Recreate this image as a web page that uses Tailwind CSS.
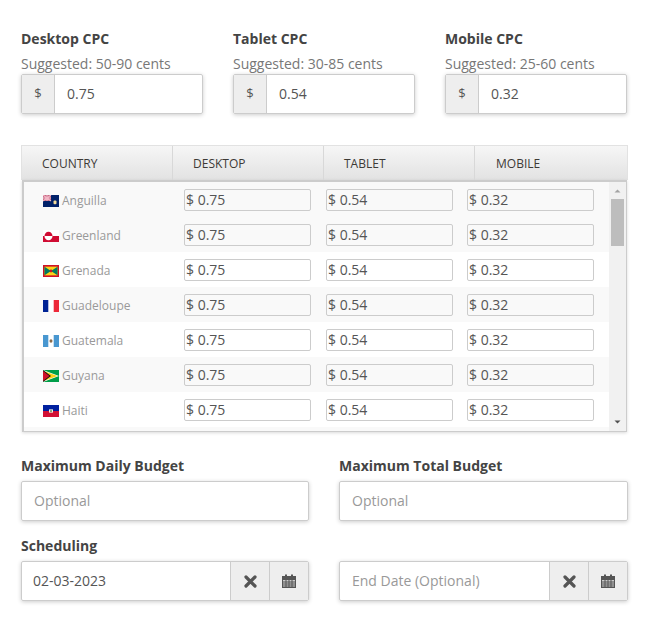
<!DOCTYPE html>
<html><head><meta charset="utf-8"><script src="https://cdn.jsdelivr.net/npm/@tailwindcss/browser@4"></script></head>
<body class="bg-white font-['Open_Sans',sans-serif] text-[14px] text-[#555]">
<div class="w-[647px] h-[619px] overflow-hidden pt-[29px] pl-[21px]">
  <div class="flex gap-[30px] w-[606px]">
    <div class="w-[182px]">
      <div class="font-bold text-[#444] leading-[20px]">Desktop CPC</div>
      <div class="text-[#777] leading-[20px] mt-[5px] h-[20px]">Suggested: 50-90 cents</div>
      <div class="flex h-[40px] border border-[#ccc] rounded-[2px] shadow-[0_1px_4px_rgba(0,0,0,0.2)]">
        <div class="w-[33px] bg-[#eee] border-r border-[#ccc] flex items-center justify-center text-[13px]">$</div>
        <div class="pl-[12px] pb-[2px] flex items-center">0.75</div>
      </div>
    </div>
    <div class="w-[182px]">
      <div class="font-bold text-[#444] leading-[20px]">Tablet CPC</div>
      <div class="text-[#777] leading-[20px] mt-[5px] h-[20px]">Suggested: 30-85 cents</div>
      <div class="flex h-[40px] border border-[#ccc] rounded-[2px] shadow-[0_1px_4px_rgba(0,0,0,0.2)]">
        <div class="w-[33px] bg-[#eee] border-r border-[#ccc] flex items-center justify-center text-[13px]">$</div>
        <div class="pl-[12px] pb-[2px] flex items-center">0.54</div>
      </div>
    </div>
    <div class="w-[182px]">
      <div class="font-bold text-[#444] leading-[20px]">Mobile CPC</div>
      <div class="text-[#777] leading-[20px] mt-[5px] h-[20px]">Suggested: 25-60 cents</div>
      <div class="flex h-[40px] border border-[#ccc] rounded-[2px] shadow-[0_1px_4px_rgba(0,0,0,0.2)]">
        <div class="w-[33px] bg-[#eee] border-r border-[#ccc] flex items-center justify-center text-[13px]">$</div>
        <div class="pl-[12px] pb-[2px] flex items-center">0.32</div>
      </div>
    </div>
  </div>

  <div class="mt-[31px] w-[607px]">
    <div class="flex h-[35px] border border-b-0 border-[#e2e2e2] bg-gradient-to-b from-[#f6f6f6] to-[#e2e2e2] text-[12px] text-[#3d3a36] leading-[35px]">
      <div class="w-[151px] shrink-0 border-r border-[#d8d8d8] pl-[20px]">COUNTRY</div>
      <div class="w-[151px] shrink-0 border-r border-[#d8d8d8] pl-[20px]">DESKTOP</div>
      <div class="w-[151px] shrink-0 border-r border-[#d8d8d8] pl-[20px]">TABLET</div>
      <div class="pl-[21px]">MOBILE</div>
    </div>
    <div class="ml-[1px] w-[605px] h-[252px] border-2 border-r border-b border-[#ccc] flex overflow-hidden shadow-[0_1px_3px_rgba(0,0,0,0.15)]">
      <div class="w-[585px] shrink-0 text-[12px] text-[#999]">
        <div class="h-[35px] flex items-center bg-[#f9f9f9]">
          <div class="w-[160px] pl-[19px] pt-[2px] flex items-center gap-[3px] shrink-0"><svg class="w-[16px] h-[12px]" viewBox="0 0 16 11" preserveAspectRatio="none"><rect width="16" height="11" fill="#012169"/><rect width="8" height="5.5" fill="#c56b85"/><path d="M0 0l8 5.5M8 0L0 5.5M4 0v5.5M0 2.75h8" stroke="#f2b6c6" stroke-width="1"/><rect x="10.5" y="5" width="3" height="3.5" rx="1" fill="#f4dc9a"/></svg>Anguilla</div>
          <div class="flex-1 flex gap-[15px]">
            <div class="w-[127px] h-[22px] shrink-0 border border-[#ccc] rounded-[2px] text-[14px] text-[#555] leading-[20px] pl-[1px]">$ 0.75</div>
            <div class="w-[127px] h-[22px] shrink-0 border border-[#ccc] rounded-[2px] text-[14px] text-[#555] leading-[20px] pl-[1px]">$ 0.54</div>
            <div class="w-[127px] h-[22px] shrink-0 -ml-[1px] border border-[#ccc] rounded-[2px] text-[14px] text-[#555] leading-[20px] pl-[1px]">$ 0.32</div>
          </div>
        </div>
        <div class="h-[35px] flex items-center bg-[#f9f9f9]">
          <div class="w-[160px] pl-[19px] pt-[2px] flex items-center gap-[3px] shrink-0"><svg class="w-[16px] h-[12px]" viewBox="0 0 16 11" preserveAspectRatio="none"><rect width="16" height="5.5" fill="#fff"/><rect y="5.5" width="16" height="5.5" fill="#d00c33"/><path d="M1.500 5.500a4 4 0 0 1 8 0z" fill="#d00c33"/><path d="M1.500 5.500a4 4 0 0 0 8 0z" fill="#fff"/></svg>Greenland</div>
          <div class="flex-1 flex gap-[15px]">
            <div class="w-[127px] h-[22px] shrink-0 border border-[#ccc] rounded-[2px] text-[14px] text-[#555] leading-[20px] pl-[1px]">$ 0.75</div>
            <div class="w-[127px] h-[22px] shrink-0 border border-[#ccc] rounded-[2px] text-[14px] text-[#555] leading-[20px] pl-[1px]">$ 0.54</div>
            <div class="w-[127px] h-[22px] shrink-0 -ml-[1px] border border-[#ccc] rounded-[2px] text-[14px] text-[#555] leading-[20px] pl-[1px]">$ 0.32</div>
          </div>
        </div>
        <div class="h-[35px] flex items-center bg-white">
          <div class="w-[160px] pl-[19px] pt-[2px] flex items-center gap-[3px] shrink-0"><svg class="w-[16px] h-[12px]" viewBox="0 0 16 11" preserveAspectRatio="none"><rect width="16" height="11" fill="#ce1126"/><rect x="1.5" y="1.5" width="13" height="8" fill="#fcd116"/><path d="M1.5 1.5L8 5.5 1.5 9.500zM14.500 1.5L8 5.5l6.500 4z" fill="#007a5e"/><circle cx="8" cy="5.500" r="1.300" fill="#ce1126"/></svg>Grenada</div>
          <div class="flex-1 flex gap-[15px]">
            <div class="w-[127px] h-[22px] shrink-0 border border-[#ccc] rounded-[2px] text-[14px] text-[#555] leading-[20px] pl-[1px] bg-white">$ 0.75</div>
            <div class="w-[127px] h-[22px] shrink-0 border border-[#ccc] rounded-[2px] text-[14px] text-[#555] leading-[20px] pl-[1px] bg-white">$ 0.54</div>
            <div class="w-[127px] h-[22px] shrink-0 -ml-[1px] border border-[#ccc] rounded-[2px] text-[14px] text-[#555] leading-[20px] pl-[1px] bg-white">$ 0.32</div>
          </div>
        </div>
        <div class="h-[35px] flex items-center bg-[#f9f9f9]">
          <div class="w-[160px] pl-[19px] pt-[2px] flex items-center gap-[3px] shrink-0"><svg class="w-[16px] h-[12px]" viewBox="0 0 16 11" preserveAspectRatio="none"><rect width="16" height="11" fill="#fff"/><rect width="5.300" height="11" fill="#002395"/><rect x="10.700" width="5.300" height="11" fill="#ed2939"/></svg>Guadeloupe</div>
          <div class="flex-1 flex gap-[15px]">
            <div class="w-[127px] h-[22px] shrink-0 border border-[#ccc] rounded-[2px] text-[14px] text-[#555] leading-[20px] pl-[1px]">$ 0.75</div>
            <div class="w-[127px] h-[22px] shrink-0 border border-[#ccc] rounded-[2px] text-[14px] text-[#555] leading-[20px] pl-[1px]">$ 0.54</div>
            <div class="w-[127px] h-[22px] shrink-0 -ml-[1px] border border-[#ccc] rounded-[2px] text-[14px] text-[#555] leading-[20px] pl-[1px]">$ 0.32</div>
          </div>
        </div>
        <div class="h-[35px] flex items-center bg-white">
          <div class="w-[160px] pl-[19px] pt-[2px] flex items-center gap-[3px] shrink-0"><svg class="w-[16px] h-[12px]" viewBox="0 0 16 11" preserveAspectRatio="none"><rect width="16" height="11" fill="#fff"/><rect width="5.300" height="11" fill="#4997d0"/><rect x="10.700" width="5.300" height="11" fill="#4997d0"/><circle cx="8" cy="5.500" r="1.500" fill="#8a6a4a"/></svg>Guatemala</div>
          <div class="flex-1 flex gap-[15px]">
            <div class="w-[127px] h-[22px] shrink-0 border border-[#ccc] rounded-[2px] text-[14px] text-[#555] leading-[20px] pl-[1px] bg-white">$ 0.75</div>
            <div class="w-[127px] h-[22px] shrink-0 border border-[#ccc] rounded-[2px] text-[14px] text-[#555] leading-[20px] pl-[1px] bg-white">$ 0.54</div>
            <div class="w-[127px] h-[22px] shrink-0 -ml-[1px] border border-[#ccc] rounded-[2px] text-[14px] text-[#555] leading-[20px] pl-[1px] bg-white">$ 0.32</div>
          </div>
        </div>
        <div class="h-[35px] flex items-center bg-[#f9f9f9]">
          <div class="w-[160px] pl-[19px] pt-[2px] flex items-center gap-[3px] shrink-0"><svg class="w-[16px] h-[12px]" viewBox="0 0 16 11" preserveAspectRatio="none"><rect width="16" height="11" fill="#009e49"/><path d="M0 0l16 5.500L0 11z" fill="#fff"/><path d="M0 .8L14.500 5.500 0 10.200z" fill="#fcd116"/><path d="M0 0l8 5.500L0 11z" fill="#111"/><path d="M0 1l6.500 4.500L0 10z" fill="#ce1126"/></svg>Guyana</div>
          <div class="flex-1 flex gap-[15px]">
            <div class="w-[127px] h-[22px] shrink-0 border border-[#ccc] rounded-[2px] text-[14px] text-[#555] leading-[20px] pl-[1px]">$ 0.75</div>
            <div class="w-[127px] h-[22px] shrink-0 border border-[#ccc] rounded-[2px] text-[14px] text-[#555] leading-[20px] pl-[1px]">$ 0.54</div>
            <div class="w-[127px] h-[22px] shrink-0 -ml-[1px] border border-[#ccc] rounded-[2px] text-[14px] text-[#555] leading-[20px] pl-[1px]">$ 0.32</div>
          </div>
        </div>
        <div class="h-[35px] flex items-center bg-white">
          <div class="w-[160px] pl-[19px] pt-[2px] flex items-center gap-[3px] shrink-0"><svg class="w-[16px] h-[12px]" viewBox="0 0 16 11" preserveAspectRatio="none"><rect width="16" height="5.500" fill="#00209f"/><rect y="5.500" width="16" height="5.500" fill="#d21034"/><rect x="6" y="4" width="4" height="3" fill="#f1f1e0"/><rect x="7.200" y="4.800" width="1.600" height="1.500" fill="#5a7a4a"/></svg>Haiti</div>
          <div class="flex-1 flex gap-[15px]">
            <div class="w-[127px] h-[22px] shrink-0 border border-[#ccc] rounded-[2px] text-[14px] text-[#555] leading-[20px] pl-[1px] bg-white">$ 0.75</div>
            <div class="w-[127px] h-[22px] shrink-0 border border-[#ccc] rounded-[2px] text-[14px] text-[#555] leading-[20px] pl-[1px] bg-white">$ 0.54</div>
            <div class="w-[127px] h-[22px] shrink-0 -ml-[1px] border border-[#ccc] rounded-[2px] text-[14px] text-[#555] leading-[20px] pl-[1px] bg-white">$ 0.32</div>
          </div>
        </div>
        <div class="h-[35px] bg-[#f9f9f9]"></div>
      </div>
      <div class="w-[17px] shrink-0 bg-[#f1f1f1] flex flex-col items-center">
        <svg class="w-[17px] h-[17px] shrink-0" viewBox="0 0 17 17"><path d="M5.500 10.500h6L8.500 7.500z" fill="#a3a3a3"/></svg>
        <div class="w-[13px] h-[47px] bg-[#bdbdbd]"></div>
        <div class="flex-1"></div>
        <svg class="w-[17px] h-[17px] shrink-0" viewBox="0 0 17 17"><path d="M5.500 6.500h6L8.500 9.500z" fill="#505050"/></svg>
      </div>
    </div>
  </div>

  <div class="mt-[24px] flex gap-[30px] w-[607px]">
    <div class="w-[288px]">
      <div class="font-bold text-[#444] leading-[20px]">Maximum Daily Budget</div>
      <div class="mt-[5px] h-[40px] border border-[#ccc] rounded-[2px] shadow-[0_1px_4px_rgba(0,0,0,0.2)] pl-[12px] pb-[2px] flex items-center text-[#999]">Optional</div>
    </div>
    <div class="w-[289px]">
      <div class="font-bold text-[#444] leading-[20px]">Maximum Total Budget</div>
      <div class="mt-[5px] h-[40px] border border-[#ccc] rounded-[2px] shadow-[0_1px_4px_rgba(0,0,0,0.2)] pl-[12px] pb-[2px] flex items-center text-[#999]">Optional</div>
    </div>
  </div>

  <div class="mt-[15px] font-bold text-[#444] leading-[20px]">Scheduling</div>
  <div class="mt-[5px] flex gap-[30px] w-[607px]">
    <div class="w-[288px] h-[40px] flex border border-[#ccc] rounded-[2px] shadow-[0_1px_4px_rgba(0,0,0,0.2)]">
      <div class="flex-1 pl-[11px] pb-[2px] flex items-center">02-03-2023</div>
      <div class="w-[39px] bg-[#eee] border-l border-[#ccc] flex items-center justify-center"><svg class="w-[13px] h-[13px]" viewBox="0 0 13 13"><path d="M2 2l9 9M11 2l-9 9" stroke="#555" stroke-width="3.200" stroke-linecap="round"/></svg></div>
      <div class="w-[39px] bg-[#eee] border-l border-[#ccc] flex items-center justify-center"><svg class="w-[14px] h-[14px] mr-[1px]" viewBox="0 0 14 14"><path d="M0 2h14v12H0z" fill="#555"/><rect x="3" y="0.500" width="2" height="2.500" fill="#555"/><rect x="9" y="0.500" width="2" height="2.500" fill="#555"/><path d="M1 6h12v7H1z" fill="#ccc"/><path d="M1 8h12M1 10h12M1 12h12M4 6v7M7 6v7M10 6v7" stroke="#555" stroke-width="1"/></svg></div>
    </div>
    <div class="w-[289px] h-[40px] flex border border-[#ccc] rounded-[2px] shadow-[0_1px_4px_rgba(0,0,0,0.2)]">
      <div class="flex-1 pl-[12px] pb-[2px] flex items-center text-[#999]">End Date (Optional)</div>
      <div class="w-[39px] bg-[#eee] border-l border-[#ccc] flex items-center justify-center"><svg class="w-[13px] h-[13px]" viewBox="0 0 13 13"><path d="M2 2l9 9M11 2l-9 9" stroke="#555" stroke-width="3.200" stroke-linecap="round"/></svg></div>
      <div class="w-[39px] bg-[#eee] border-l border-[#ccc] flex items-center justify-center"><svg class="w-[14px] h-[14px] mr-[1px]" viewBox="0 0 14 14"><path d="M0 2h14v12H0z" fill="#555"/><rect x="3" y="0.500" width="2" height="2.500" fill="#555"/><rect x="9" y="0.500" width="2" height="2.500" fill="#555"/><path d="M1 6h12v7H1z" fill="#ccc"/><path d="M1 8h12M1 10h12M1 12h12M4 6v7M7 6v7M10 6v7" stroke="#555" stroke-width="1"/></svg></div>
    </div>
  </div>
</div>
</body></html>
